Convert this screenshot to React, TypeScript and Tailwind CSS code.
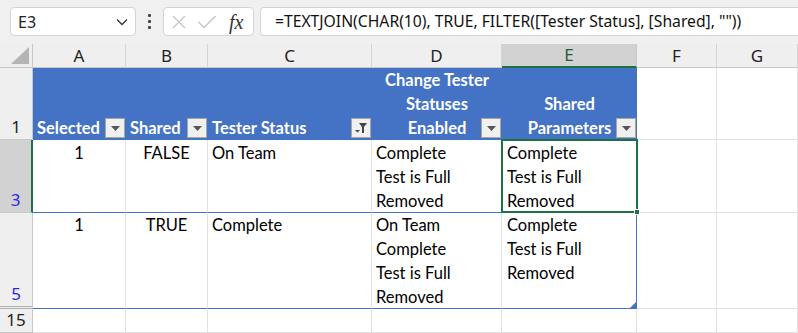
import React from "react";

const cellFont = { fontFamily: "Lato, 'Liberation Sans', sans-serif" };
const uiFont = { fontFamily: "'Noto Sans', 'Open Sans', sans-serif" };

function DropBtn({ filter = false }: { filter?: boolean }) {
  return (
    <div className="absolute right-[1px] bottom-[2px] w-[20px] h-[20px] bg-[#f0f0f0] border border-[#a6a6a6] flex items-center justify-center">
      {filter ? (
        <svg width="14" height="12" viewBox="0 0 14 12">
          <path d="M5 1 H13 L10 5 V11 H8 V5 Z" fill="#444" />
          <path d="M1 8 H6 L3.5 10.5 Z" fill="#444" />
        </svg>
      ) : (
        <svg width="9" height="5" viewBox="0 0 9 5">
          <path d="M0 0 H9 L4.5 5 Z" fill="#555" />
        </svg>
      )}
    </div>
  );
}

function Lines({ items }: { items: string[] }) {
  return (
    <>
      {items.map((t, i) => (
        <div key={i} className="h-[24px] leading-[24px] whitespace-nowrap">
          {t}
        </div>
      ))}
    </>
  );
}

export default function App() {
  const colLetters = ["A", "B", "C", "D", "E", "F", "G"];
  return (
    <div className="w-[798px] h-[333px] overflow-hidden bg-white flex flex-col">
      {/* Toolbar */}
      <div className="h-[44px] bg-[#f0f0f0] flex items-start pt-[7px] pl-[10px] gap-0 shrink-0" style={uiFont}>
        <div className="w-[126px] h-[29px] bg-white border border-[#d4d4d4] rounded-[4px] flex items-center justify-between pl-[7px] pr-[7px]">
          <span className="text-[16px] text-[#222]">E3</span>
          <svg width="12" height="8" viewBox="0 0 12 8">
            <path d="M1 1.5 L6 6.5 L11 1.5" stroke="#333" strokeWidth="1.3" fill="none" />
          </svg>
        </div>
        <div className="w-[27px] h-[29px] flex flex-col items-center justify-center gap-[3px]">
          <div className="w-[3px] h-[3px] bg-[#444] rounded-[1px]" />
          <div className="w-[3px] h-[3px] bg-[#444] rounded-[1px]" />
          <div className="w-[3px] h-[3px] bg-[#444] rounded-[1px]" />
        </div>
        <div className="w-[91px] h-[29px] bg-white border border-[#d4d4d4] rounded-[4px] flex items-center pl-[7px] gap-[10px]">
          <svg width="16" height="16" viewBox="0 0 16 16">
            <path d="M2 2 L14 14 M14 2 L2 14" stroke="#c4c4c4" strokeWidth="1.3" fill="none" />
          </svg>
          <svg width="20" height="16" viewBox="0 0 20 16">
            <path d="M1.5 8 L7 13.5 L18.5 2" stroke="#c4c4c4" strokeWidth="1.3" fill="none" />
          </svg>
          <span
            className="text-[20px] italic text-[#333] leading-none ml-[2px]"
            style={{ fontFamily: "'Liberation Serif', 'DejaVu Serif', serif" }}
          >
            fx
          </span>
        </div>
        <div className="ml-[6px] flex-1 h-[29px] bg-white border border-[#d4d4d4] rounded-l-[4px] border-r-0 flex items-center pl-[14px]">
          <span className="text-[15.7px] text-[#111] whitespace-nowrap">
            =TEXTJOIN(CHAR(10), TRUE, FILTER([Tester Status], [Shared], ""))
          </span>
        </div>
      </div>

      {/* Sheet grid */}
      <div
        className="relative grid grid-cols-[33px_93px_82px_164px_130px_135px_80px_81px] grid-rows-[24px_72px_73px_96px_24px] text-black"
        style={cellFont}
      >
        {/* Column header row */}
        <div className="bg-[#efefef] border-r border-b border-[#c8c8c8] relative flex items-end justify-end pr-[3px] pb-[3px]">
          <svg width="18" height="17" viewBox="0 0 18 17">
            <path d="M18 0 V17 H0 Z" fill="#b4b4b4" />
          </svg>
        </div>
        {colLetters.map((l) => (
          <div
            key={l}
            className={
              l === "E"
                ? "bg-[#d2d2d2] border-r border-[#c8c8c8] border-b-2 border-b-[#1e7145] flex items-center justify-center text-[17px] text-[#1e5c38]"
                : "bg-[#efefef] border-r border-b border-[#d4d4d4] border-b-[#c8c8c8] flex items-center justify-center text-[17px] text-[#222]"
            }
            style={uiFont}
          >
            {l}
          </div>
        ))}

        {/* Row 1 */}
        <div className="bg-[#efefef] border-r border-b border-[#c8c8c8] flex items-end justify-center pb-[0px] text-[17px] text-[#222]" style={uiFont}>
          1
        </div>
        <div className="relative bg-[#4472c4] text-white font-bold text-[16.5px] flex flex-col justify-end pl-[4px]">
          <Lines items={["Selected"]} />
          <DropBtn />
        </div>
        <div className="relative bg-[#4472c4] text-white font-bold text-[16.5px] flex flex-col justify-end pl-[4px]">
          <Lines items={["Shared"]} />
          <DropBtn />
        </div>
        <div className="relative bg-[#4472c4] text-white font-bold text-[16.5px] flex flex-col justify-end pl-[4px]">
          <Lines items={["Tester Status"]} />
          <DropBtn filter />
        </div>
        <div className="relative bg-[#4472c4] text-white font-bold text-[16.5px] flex flex-col justify-end items-center">
          <Lines items={["Change Tester", "Statuses", "Enabled"]} />
          <DropBtn />
        </div>
        <div className="relative bg-[#4472c4] text-white font-bold text-[16.5px] flex flex-col justify-end items-center">
          <Lines items={["Shared", "Parameters"]} />
          <DropBtn />
        </div>
        <div className="border-r border-b border-[#e1e1e1]" />
        <div className="border-r border-b border-[#e1e1e1]" />

        {/* Row 3 */}
        <div className="bg-[#d2d2d2] border-r-2 border-r-[#1e7145] border-b border-b-[#c8c8c8] flex items-end justify-center pb-[0px] text-[17px] text-[#2a2ae0]" style={uiFont}>
          3
        </div>
        <div className="border-r border-[#e1e1e1] border-b border-b-[#4472c4] text-[16.5px] text-center leading-[24px] pt-[1px]">1</div>
        <div className="border-r border-[#e1e1e1] border-b border-b-[#4472c4] text-[16.5px] text-center leading-[24px] pt-[1px]">FALSE</div>
        <div className="border-r border-[#e1e1e1] border-b border-b-[#4472c4] text-[16.5px] pl-[4px] leading-[24px] pt-[1px]">On Team</div>
        <div className="border-r border-[#e1e1e1] border-b border-b-[#4472c4] text-[16.5px] pl-[4px] pt-[1px]">
          <Lines items={["Complete", "Test is Full", "Removed"]} />
        </div>
        <div className="border-r border-[#4472c4] border-b border-b-[#4472c4] text-[16.5px] pl-[5px] pt-[1px]">
          <Lines items={["Complete", "Test is Full", "Removed"]} />
        </div>
        <div className="border-r border-b border-[#e1e1e1]" />
        <div className="border-r border-b border-[#e1e1e1]" />

        {/* Row 5 */}
        <div className="bg-[#efefef] border-r border-[#c8c8c8] border-b-[3px] border-double border-b-[#b0b0b0] flex items-end justify-center pb-[0px] text-[17px] text-[#2a2ae0]" style={uiFont}>
          5
        </div>
        <div className="border-r border-[#e1e1e1] border-b border-b-[#4472c4] text-[16.5px] text-center leading-[24px]">1</div>
        <div className="border-r border-[#e1e1e1] border-b border-b-[#4472c4] text-[16.5px] text-center leading-[24px]">TRUE</div>
        <div className="border-r border-[#e1e1e1] border-b border-b-[#4472c4] text-[16.5px] pl-[4px] leading-[24px]">Complete</div>
        <div className="border-r border-[#e1e1e1] border-b border-b-[#4472c4] text-[16.5px] pl-[4px]">
          <Lines items={["On Team", "Complete", "Test is Full", "Removed"]} />
        </div>
        <div className="relative border-r border-[#4472c4] border-b border-b-[#4472c4] text-[16.5px] pl-[5px]">
          <Lines items={["Complete", "Test is Full", "Removed"]} />
          <svg className="absolute right-0 bottom-0" width="6" height="6" viewBox="0 0 6 6">
            <path d="M6 0 V6 H0 Z" fill="#4472c4" />
          </svg>
        </div>
        <div className="border-r border-b border-[#e1e1e1]" />
        <div className="border-r border-b border-[#e1e1e1]" />

        {/* Row 15 */}
        <div className="bg-[#efefef] border-r border-b border-[#c8c8c8] flex items-end justify-center pb-[0px] text-[17px] text-[#222]" style={uiFont}>
          15
        </div>
        {[0, 1, 2, 3, 4, 5, 6].map((i) => (
          <div key={i} className="border-r border-b border-[#e1e1e1]" />
        ))}

        {/* Selection overlay on E3 */}
        <div className="absolute left-[501px] top-[95px] w-[137px] h-[74px] border-2 border-[#1e7145] pointer-events-none">
          <div className="absolute right-[-4px] bottom-[-4px] w-[6px] h-[6px] bg-[#1e7145] border border-white" />
        </div>
      </div>
    </div>
  );
}
